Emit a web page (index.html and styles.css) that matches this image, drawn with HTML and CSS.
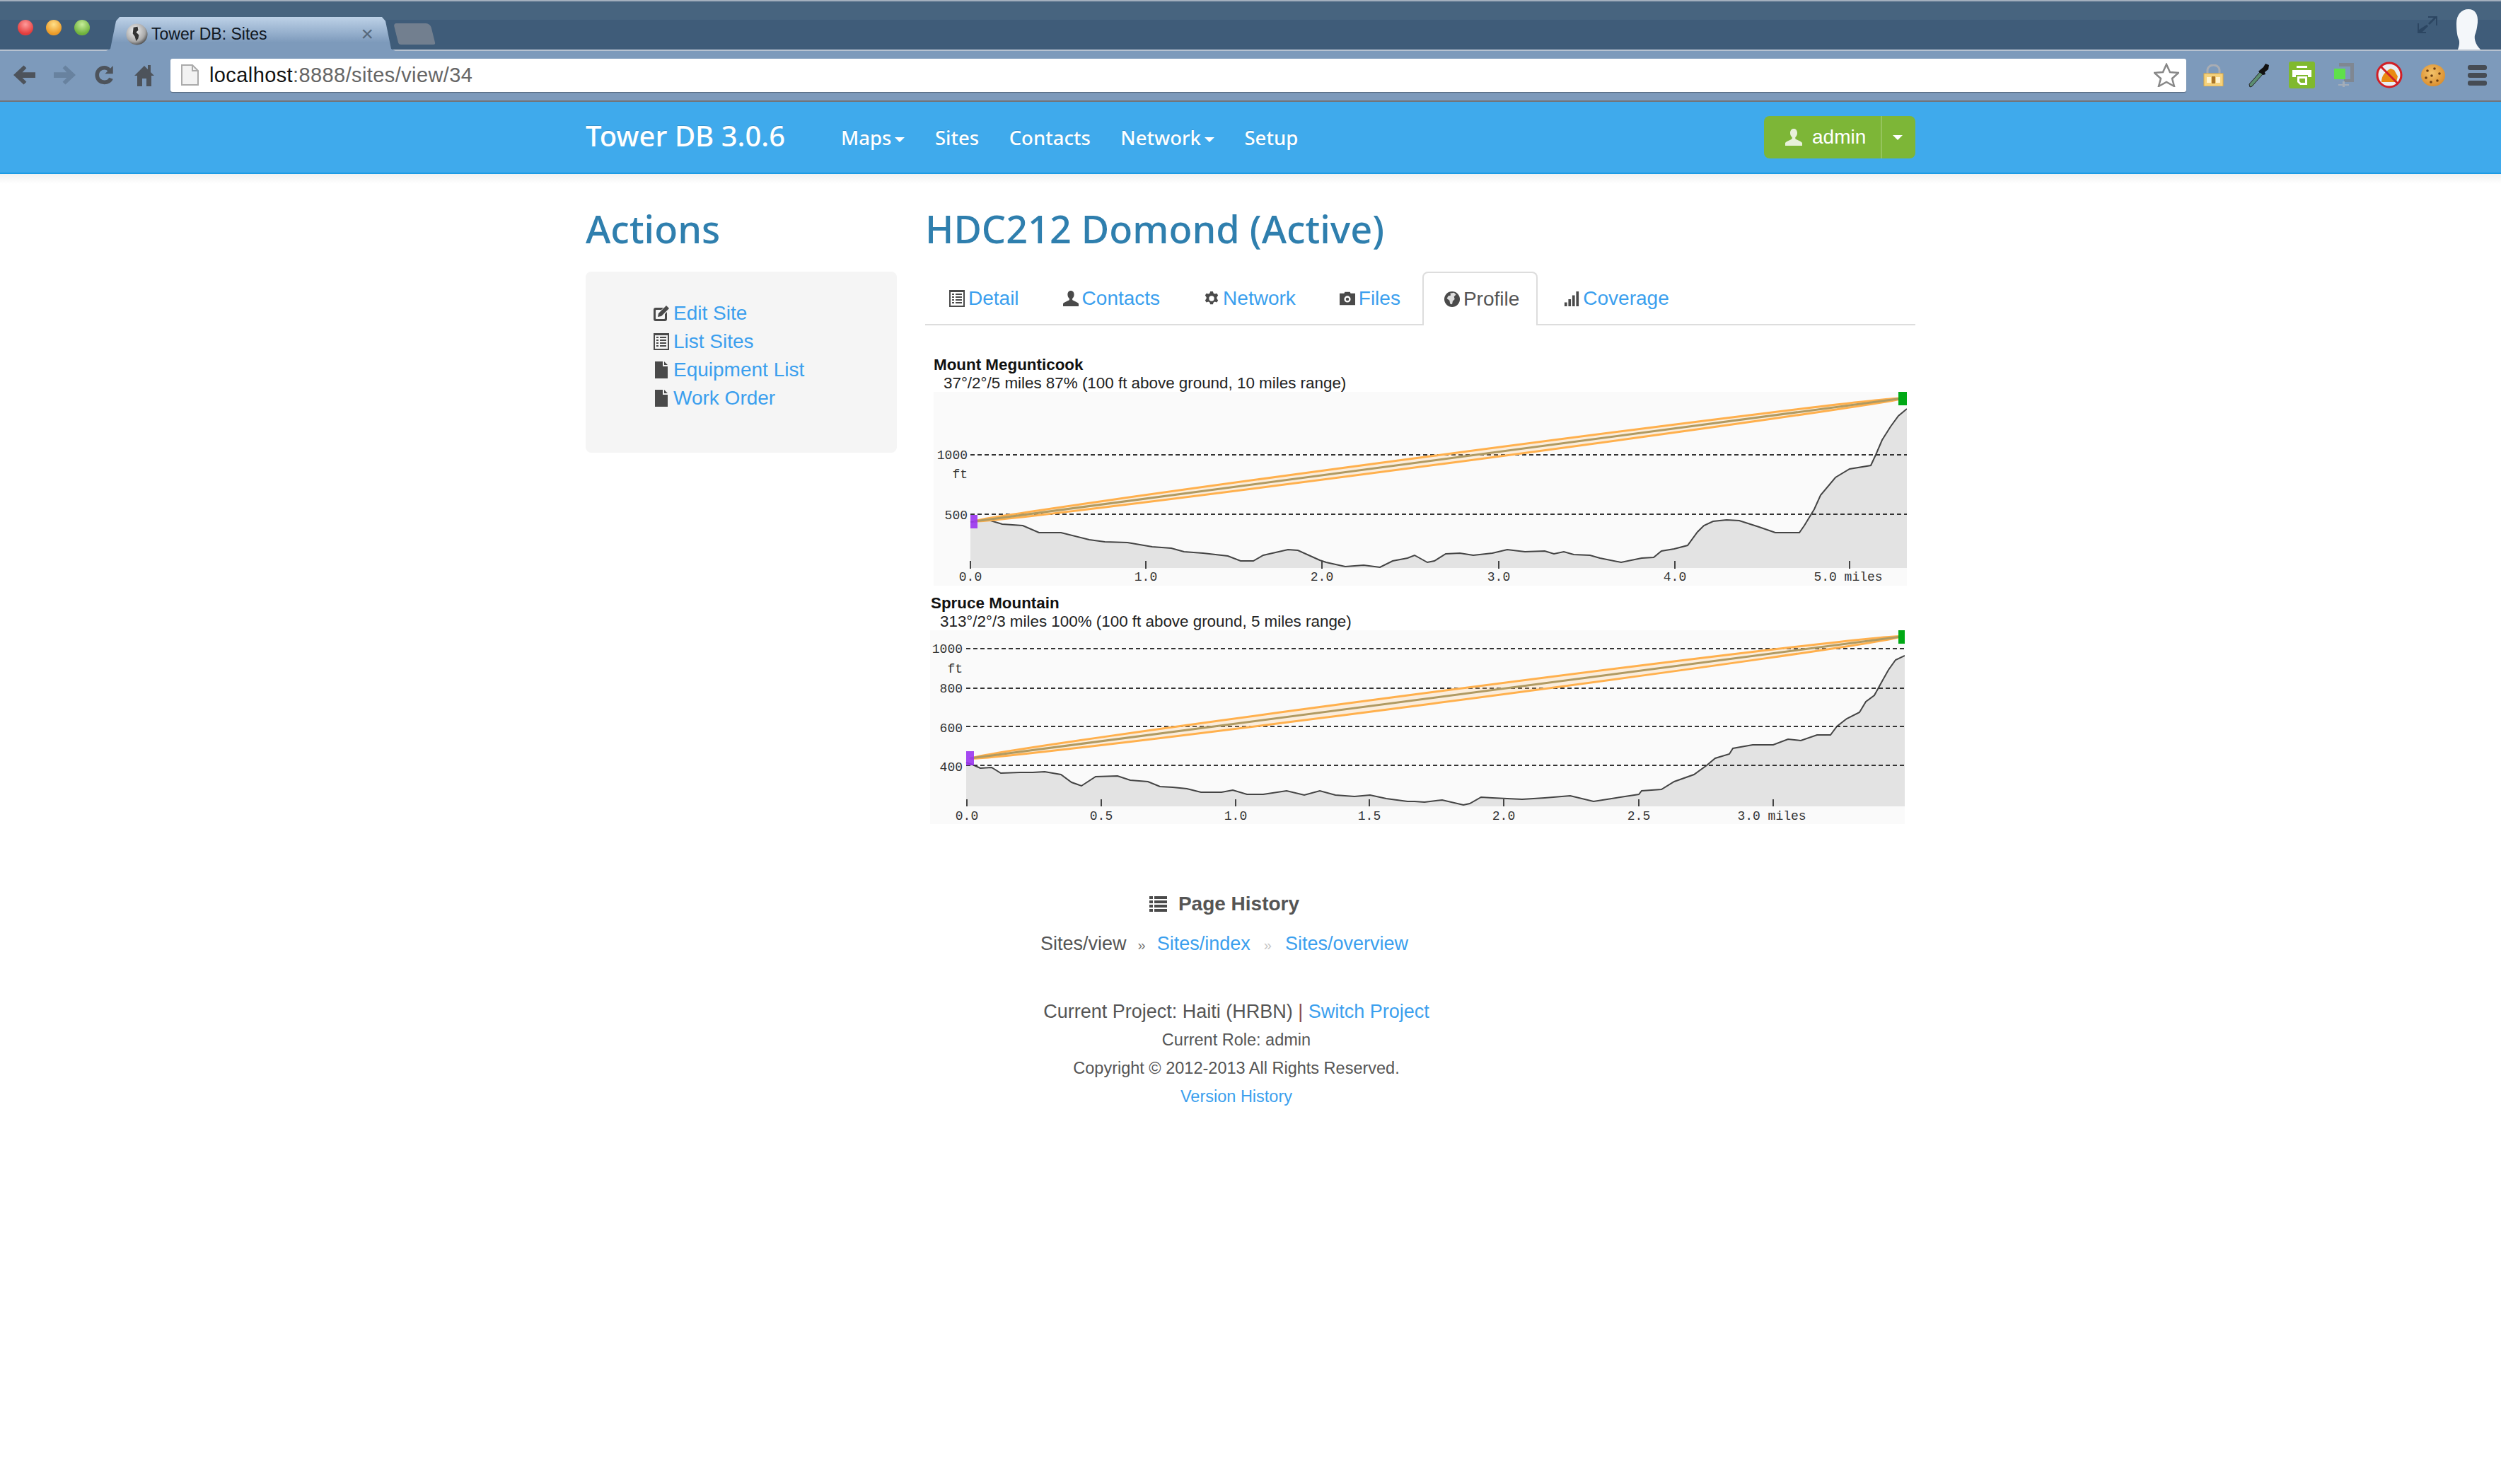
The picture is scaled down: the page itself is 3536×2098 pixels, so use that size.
FILE: index.html
```html
<!DOCTYPE html>
<html lang="en">
<head>
    <meta charset="UTF-8">
    <title>Tower DB: Sites</title>
    <link rel="stylesheet" href="styles.css">
</head>
<body>
    <svg class="defs" width="0" height="0">
        <symbol id="i-user" viewBox="0 0 24 24"><path d="M12 0c3.300 0 5 2.700 5 6 0 2.700-1.100 4.900-2.700 6v2c0 1.200 7.700 3.200 9.700 6v4H0v-4c2-2.800 9.700-4.800 9.700-6v-2C8.100 10.900 7 8.700 7 6c0-3.300 1.700-6 5-6z"/></symbol>
        <symbol id="i-listalt" viewBox="0 0 22 24"><path fill-rule="evenodd" d="M0 0h22v24H0zM2 3v19h18V3zM4 5h3v2H4zM9 5h9v2H9zM4 9h3v2H4zM9 9h9v2H9zM4 13h3v2H4zM9 13h9v2H9zM4 17h3v2H4zM9 17h9v2H9z"/></symbol>
        <symbol id="i-file" viewBox="0 0 18 24"><path d="M0 0h11v7h7v17H0zM13 0l5 5h-5z"/></symbol>
        <symbol id="i-edit" viewBox="0 0 24 24"><path d="M4 4h11l-3 3H5a1 1 0 0 0-1 1v11a1 1 0 0 0 1 1h11a1 1 0 0 0 1-1v-6l3-3v10a3 3 0 0 1-3 3H4a3 3 0 0 1-3-3V7a3 3 0 0 1 3-3zM19 1l4 4L12 16l-5 1 1-5z"/></symbol>
    </svg>

    <header class="chrome">
        <div class="tabstrip">
            <div class="lights">
                <span class="light light-red"></span>
                <span class="light light-amber"></span>
                <span class="light light-green"></span>
            </div>
            <div class="tab">
                <svg class="favicon" viewBox="0 0 32 32">
                    <defs><radialGradient id="globe" cx="40%" cy="35%" r="70%"><stop offset="0" stop-color="#f5f5f5"/><stop offset=".7" stop-color="#a9a9a9"/><stop offset="1" stop-color="#444"/></radialGradient></defs>
                    <circle cx="16" cy="16" r="15.500" fill="url(#globe)"/>
                    <path d="M11 6l6-1 1 5-3 3 4 4-1 5-3 4-2-7-3-4z" fill="#333"/>
                </svg>
                <span class="tab-title">Tower DB: Sites</span>
                <span class="tab-close">×</span>
            </div>
            <div class="newtab"></div>
            <svg class="expand" viewBox="0 0 28 30"><path d="M15 3h13v13h-2V6l-9 9-2-2 8-8h-8zM13 15l2 2-8 8h5v2H0v-4h0V13h2v9z" fill="#2c4662"/></svg>
            <svg class="avatar" viewBox="0 0 34 57"><path d="M17 0c9 0 14 7 13 19-1 8-2 13-4 18-1 5 1 13 8 20H2c2-5 3-11 1-15C1 38 0 30 0 20 0 8 7 0 17 0z" fill="#f4f7fa"/></svg>
        </div>
        <div class="toolbar">
            <svg class="tool" viewBox="0 0 32 30"><path d="M15 1l4 4-6 6h19v8H13l6 6-4 4L0 15z" fill="#4d535b"/></svg>
            <svg class="tool" viewBox="0 0 32 30"><path d="M17 1l-4 4 6 6H0v8h19l-6 6 4 4 15-14z" fill="#68829f"/></svg>
            <svg class="tool" viewBox="0 0 32 32"><path d="M15 2C7 2 1 8 1 16s6 14 14 14c6 0 11-3 13-8l-6-2c-1 3-4 4-7 4-4 0-8-3-8-8s4-8 8-8c2 0 4 1 5 2l-4 4h12V2l-4 4c-2-2-5-4-9-4z" fill="#4d535b"/></svg>
            <svg class="tool tool-home" viewBox="0 0 28 32"><path d="M14 3L0 17h4v15h7V21h6v11h7V17h4l-5-5V2h-4v6z" fill="#4d535b"/></svg>
            <div class="omnibox">
                <svg class="pageicon" viewBox="0 0 25 30"><path d="M1 1h15l8 8v20H1z" fill="#f2f2f2" stroke="#aaa" stroke-width="2"/><path d="M16 1v8h8" fill="none" stroke="#aaa" stroke-width="2"/></svg>
                <span class="url-host">localhost</span><span class="url-path">:8888/sites/view/34</span>
                <svg class="star" viewBox="0 0 36 34"><path d="M18 2l5 11 12 1-9 8 3 11-11-6-11 6 3-11-9-8 12-1z" fill="#fff" stroke="#888" stroke-width="2.500"/></svg>
            </div>
            <div class="extensions">
                <svg class="ext ext-lock" viewBox="0 0 29 31"><path d="M6 14V8a8.500 7 0 0 1 17 0v6" fill="none" stroke="#a9adb3" stroke-width="3"/><rect x="1" y="13" width="27" height="18" fill="#f5d27c" stroke="#e0a93e"/><path d="M5 18h6v8H5zM18 18h6v8h-6z" fill="#fff3cf"/><rect x="12" y="17" width="5" height="10" fill="#a9752a"/></svg>
                <svg class="ext ext-dropper" viewBox="0 0 30 35"><path d="M2 34l-1-4L16 13l4 3L5 33z" fill="#5d8f72" stroke="#222"/><path d="M15 11l6-5 3-5 5 2-1 6-5 4 1 3-3 1-7-5z" fill="#111"/></svg>
                <svg class="ext ext-print" viewBox="0 0 37 38"><rect width="37" height="38" rx="3" fill="#80b92e"/><path d="M11 6h15v3H11zM5 12h27v10h-5v-3H10v3H5z" fill="#fff"/><path d="M12 21h14v12H16l-4-4z" fill="#fff"/><path d="M15 24h8v6h-6l-2-2z" fill="#80b92e"/></svg>
                <svg class="ext ext-clamp" viewBox="0 0 30 37"><path d="M8 1h21v27H15v-4h9V6H8z" fill="#7f8792"/><rect x="1" y="9" width="16" height="15" fill="#5fe04a"/><path d="M13 27h3v8h-3zM7 31h15v2H7z" fill="#a4adb8"/></svg>
                <svg class="ext ext-block" viewBox="0 0 38 38"><circle cx="19" cy="19" r="17" fill="#e9eef3"/><path d="M8 29c0-9 5-15 13-19l5 2 5 9-2 8z" fill="#e98a10"/><circle cx="19" cy="19" r="17" fill="none" stroke="#d11f26" stroke-width="3"/><path d="M7 7l24 24" stroke="#d11f26" stroke-width="3"/></svg>
                <svg class="ext ext-cookie" viewBox="0 0 34 31"><defs><radialGradient id="cookie" cx="45%" cy="40%" r="65%"><stop offset="0" stop-color="#f3c26a"/><stop offset="1" stop-color="#d98b2a"/></radialGradient></defs><ellipse cx="17" cy="15.500" rx="17" ry="15.500" fill="url(#cookie)"/><g fill="#6b3d12"><circle cx="9" cy="9" r="1.800"/><circle cx="19" cy="6" r="1.800"/><circle cx="26" cy="13" r="1.800"/><circle cx="15" cy="16" r="1.800"/><circle cx="7" cy="19" r="1.800"/><circle cx="23" cy="23" r="1.800"/><circle cx="14" cy="25" r="1.800"/></g></svg>
                <div class="menu"><span></span><span></span><span></span></div>
            </div>
        </div>
    </header>

    <nav class="navbar">
        <div class="container navbar-inner">
            <a class="brand">Tower DB 3.0.6</a>
            <ul class="nav-links">
                <li>Maps<span class="caret"></span></li>
                <li>Sites</li>
                <li>Contacts</li>
                <li>Network<span class="caret"></span></li>
                <li>Setup</li>
            </ul>
            <div class="btn-group">
                <div class="btn-main">
                    <svg class="btn-icon"><use href="#i-user"/></svg>
                    <span>admin</span>
                </div>
                <div class="btn-caret"><span class="caret"></span></div>
            </div>
        </div>
    </nav>
    <div class="navbar-shadow"></div>

    <main class="container">
        <div class="columns">
            <aside class="sidebar">
                <h2 class="page-heading">Actions</h2>
                <ul class="actions">
                    <li><svg class="icon"><use href="#i-edit"/></svg><a>Edit Site</a></li>
                    <li><svg class="icon"><use href="#i-listalt"/></svg><a>List Sites</a></li>
                    <li><svg class="icon"><use href="#i-file"/></svg><a>Equipment List</a></li>
                    <li><svg class="icon"><use href="#i-file"/></svg><a>Work Order</a></li>
                </ul>
            </aside>
            <section class="content">
                <h2 class="page-heading">HDC212 Domond (Active)</h2>
                <ul class="tabs">
                    <li><svg class="icon"><use href="#i-listalt"/></svg><a>Detail</a></li>
                    <li><svg class="icon"><use href="#i-user"/></svg><a>Contacts</a></li>
                    <li>
                        <svg class="icon" viewBox="0 0 24 24"><path fill-rule="evenodd" d="M10 1h4l1 3 2 1 3-1 2 3-2 3v2l2 3-2 3-3-1-2 1-1 3h-4l-1-3-2-1-3 1-2-3 2-3v-2L2 7l2-3 3 1 2-1zM12 8a4 4 0 1 0 0 8 4 4 0 0 0 0-8z"/></svg>
                        <a>Network</a>
                    </li>
                    <li>
                        <svg class="icon" viewBox="0 0 24 24"><path fill-rule="evenodd" d="M7 4l1-2h8l1 2h7v18H0V4zM12 8a5 5 0 1 0 0 10 5 5 0 0 0 0-10zM12 10.500a2.500 2.500 0 1 1 0 5 2.500 2.500 0 0 1 0-5z"/></svg>
                        <a>Files</a>
                    </li>
                    <li class="active">
                        <svg class="icon" viewBox="0 0 24 24"><circle cx="12" cy="12" r="12"/><path d="M9 3l6-1 3 3-3 3 1 4-3 3-1 5-3-1-1-5-4-3 2-4 4-1z" fill="#ddd"/></svg>
                        <a>Profile</a>
                    </li>
                    <li>
                        <svg class="icon" viewBox="0 0 24 24"><path d="M1 18h4v6H1zM7 13h4v11H7zM13 7h4v17h-4zM19 1h4v23h-4z"/></svg>
                        <a>Coverage</a>
                    </li>
                </ul>

                <div class="profile profile-first">
                    <div class="profile-name">Mount Megunticook</div>
                    <div class="profile-info">37°/2°/5 miles 87% (100 ft above ground, 10 miles range)</div>
                    <svg class="chart" width="1376" height="274" viewBox="1320 554 1376 274">
                        <rect class="chart-bg" x="1320" y="554" width="1376" height="274"/>
                        <path class="ground" d="M1372 803V738L1382 737 1397 735 1417 741 1446 743 1469 753 1500 753 1540 763 1562 766 1594 767 1629 773 1656 775 1674 780 1701 782 1736 786 1754 793 1772 793 1786 785 1821 777 1835 778 1866 792 1875 795 1902 801 1928 799 1951 802 1969 793 1990 789 2000 785 2018 795 2028 793 2044 783 2064 782 2083 785 2110 782 2131 777 2156 780 2184 779 2197 783 2211 780 2225 784 2248 785 2262 789 2292 795 2321 789 2338 788 2349 779 2367 776 2386 771 2400 752 2409 743 2422 737 2441 735 2459 736 2487 745 2510 753 2544 753 2551 743 2565 720 2574 700 2595 675 2615 663 2645 658 2652 643 2661 622 2673 603 2684 588 2696 578V803z"/>
                        <polyline class="terrain" points="1372,738 1382,737 1397,735 1417,741 1446,743 1469,753 1500,753 1540,763 1562,766 1594,767 1629,773 1656,775 1674,780 1701,782 1736,786 1754,793 1772,793 1786,785 1821,777 1835,778 1866,792 1875,795 1902,801 1928,799 1951,802 1969,793 1990,789 2000,785 2018,795 2028,793 2044,783 2064,782 2083,785 2110,782 2131,777 2156,780 2184,779 2197,783 2211,780 2225,784 2248,785 2262,789 2292,795 2321,789 2338,788 2349,779 2367,776 2386,771 2400,752 2409,743 2422,737 2441,735 2459,736 2487,745 2510,753 2544,753 2551,743 2565,720 2574,700 2595,675 2615,663 2645,658 2652,643 2661,622 2673,603 2684,588 2696,578"/>
                        <line class="grid" x1="1372" y1="643" x2="2696" y2="643"/>
                        <line class="grid" x1="1372" y1="727" x2="2696" y2="727"/>
                        <path class="tick" d="M1372 793v11M1620 793v11M1869 793v11M2119 793v11M2368 793v11M2615 793v11"/>
                        <text class="label" x="1368" y="649" text-anchor="end">1000</text>
                        <text class="label" x="1368" y="676" text-anchor="end">ft</text>
                        <text class="label" x="1368" y="734" text-anchor="end">500</text>
                        <text class="label" x="1372" y="821" text-anchor="middle">0.0</text>
                        <text class="label" x="1620" y="821" text-anchor="middle">1.0</text>
                        <text class="label" x="1869" y="821" text-anchor="middle">2.0</text>
                        <text class="label" x="2119" y="821" text-anchor="middle">3.0</text>
                        <text class="label" x="2368" y="821" text-anchor="middle">4.0</text>
                        <text class="label" x="2613" y="821" text-anchor="middle">5.0 miles</text>
                        <path class="zone" d="M1378 737A661.600 6.500 -7.550 0 1 2690 563A661.600 6.500 -7.550 0 1 1378 737z"/>
                        <line class="beam" x1="1378" y1="737" x2="2690" y2="563"/>
                        <rect class="mark-from" x="1372" y="728" width="10" height="19"/>
                        <rect class="mark-to" x="2684" y="554" width="12" height="19"/>
                    </svg>
                </div>

                <div class="profile profile-second">
                    <div class="profile-name">Spruce Mountain</div>
                    <div class="profile-info">313°/2°/3 miles 100% (100 ft above ground, 5 miles range)</div>
                    <svg class="chart" width="1378" height="274" viewBox="1315 891 1378 274">
                        <rect class="chart-bg" x="1315" y="891" width="1378" height="274"/>
                        <path class="ground" d="M1366 1140V1078L1375 1081 1386 1086 1402 1085 1415 1093 1442 1092 1460 1092 1477 1091 1500 1095 1515 1106 1529 1111 1549 1098 1580 1097 1598 1103 1623 1105 1640 1112 1658 1113 1678 1115 1698 1120 1727 1120 1743 1117 1763 1123 1786 1123 1819 1118 1844 1124 1866 1118 1888 1124 1915 1126 1937 1124 1960 1129 1990 1133 2000 1133 2014 1134 2039 1131 2069 1138 2078 1136 2094 1127 2110 1128 2152 1130 2184 1128 2220 1125 2253 1133 2285 1128 2317 1123 2321 1118 2349 1116 2367 1105 2395 1095 2413 1082 2425 1072 2445 1066 2450 1058 2478 1053 2507 1053 2528 1045 2546 1047 2569 1039 2588 1039 2597 1027 2611 1016 2629 1007 2638 992 2650 983 2661 963 2670 947 2680 933 2693 927V1140z"/>
                        <polyline class="terrain" points="1366,1078 1375,1081 1386,1086 1402,1085 1415,1093 1442,1092 1460,1092 1477,1091 1500,1095 1515,1106 1529,1111 1549,1098 1580,1097 1598,1103 1623,1105 1640,1112 1658,1113 1678,1115 1698,1120 1727,1120 1743,1117 1763,1123 1786,1123 1819,1118 1844,1124 1866,1118 1888,1124 1915,1126 1937,1124 1960,1129 1990,1133 2000,1133 2014,1134 2039,1131 2069,1138 2078,1136 2094,1127 2110,1128 2152,1130 2184,1128 2220,1125 2253,1133 2285,1128 2317,1123 2321,1118 2349,1116 2367,1105 2395,1095 2413,1082 2425,1072 2445,1066 2450,1058 2478,1053 2507,1053 2528,1045 2546,1047 2569,1039 2588,1039 2597,1027 2611,1016 2629,1007 2638,992 2650,983 2661,963 2670,947 2680,933 2693,927"/>
                        <line class="grid" x1="1366" y1="917" x2="2693" y2="917"/>
                        <line class="grid" x1="1366" y1="973" x2="2693" y2="973"/>
                        <line class="grid" x1="1366" y1="1027" x2="2693" y2="1027"/>
                        <line class="grid" x1="1366" y1="1082" x2="2693" y2="1082"/>
                        <path class="tick" d="M1367 1130v10M1557 1130v10M1747 1130v10M1936 1130v10M2126 1130v10M2317 1130v10M2507 1130v10"/>
                        <text class="label" x="1361" y="923" text-anchor="end">1000</text>
                        <text class="label" x="1361" y="951" text-anchor="end">ft</text>
                        <text class="label" x="1361" y="979" text-anchor="end">800</text>
                        <text class="label" x="1361" y="1035" text-anchor="end">600</text>
                        <text class="label" x="1361" y="1090" text-anchor="end">400</text>
                        <text class="label" x="1367" y="1159" text-anchor="middle">0.0</text>
                        <text class="label" x="1557" y="1159" text-anchor="middle">0.5</text>
                        <text class="label" x="1747" y="1159" text-anchor="middle">1.0</text>
                        <text class="label" x="1936" y="1159" text-anchor="middle">1.5</text>
                        <text class="label" x="2126" y="1159" text-anchor="middle">2.0</text>
                        <text class="label" x="2317" y="1159" text-anchor="middle">2.5</text>
                        <text class="label" x="2505" y="1159" text-anchor="middle">3.0 miles</text>
                        <path class="zone" d="M1372 1072A663.600 8 -7.450 0 1 2688 900A663.600 8 -7.450 0 1 1372 1072z"/>
                        <line class="beam" x1="1372" y1="1072" x2="2688" y2="900"/>
                        <rect class="mark-from" x="1366" y="1062" width="11" height="20"/>
                        <rect class="mark-to" x="2684" y="891" width="9" height="19"/>
                    </svg>
                </div>
            </section>
        </div>

        <div class="history">
            <div class="history-title">
                <svg class="history-icon" viewBox="0 0 25 22"><path d="M0 0h5v4H0zM7 0h18v4H7zM0 6h5v4H0zM7 6h18v4H7zM0 12h5v4H0zM7 12h18v4H7zM0 18h5v4H0zM7 18h18v4H7z"/></svg>
                <span>Page History</span>
            </div>
            <div class="crumbs">
                <span>Sites/view</span><i class="sep">»</i><a>Sites/index</a><i class="sep sep-light">»</i><a>Sites/overview</a>
            </div>
        </div>

        <footer class="footer">
            <div class="footer-project">Current Project: Haiti (HRBN) <span class="pipe">|</span> <a>Switch Project</a></div>
            <div>Current Role: admin</div>
            <div>Copyright © 2012-2013 All Rights Reserved.</div>
            <div><a>Version History</a></div>
        </footer>
    </main>
</body>
</html>
```

FILE: styles.css
```css
* { box-sizing: border-box; }
body { margin: 0; background: #fff; color: #555; font-family: "Liberation Sans", Arial, sans-serif; font-size: 28px; }
ul { list-style: none; margin: 0; padding: 0; }
a { color: #3b9fee; }
.defs { position: absolute; }
.container { width: 1880px; margin: 0 auto; }

/* browser window */
.chrome { height: 144px; }
.tabstrip { height: 72px; display: flex; padding-left: 25px; border-top: 2px solid #a3afbd; border-bottom: 2px solid #b7c2d0; background: linear-gradient(#47647f 0, #47647f 26px, #3f5c79 26px); }
.lights { display: flex; gap: 18px; padding-top: 26px; }
.light { width: 22px; height: 22px; border-radius: 50%; }
.light-red { background: radial-gradient(circle at 50% 30%, #ff9b9b, #e33c3c 70%); }
.light-amber { background: radial-gradient(circle at 50% 30%, #ffe08a, #ec9a26 70%); }
.light-green { background: radial-gradient(circle at 50% 30%, #c6ec9a, #6fb23c 70%); }
.tab { width: 409px; height: 48px; margin: 22px 0 0 23px; padding-left: 28px; display: flex; align-items: center; flex: none; background: linear-gradient(#bdd1e7 0, #93adcb 50%, #7d9abb 75%); clip-path: polygon(0 100%, 6px 94%, 14px 12%, 19px 0, 390px 0, 395px 12%, 403px 94%, 100% 100%); }
.favicon { width: 31px; height: 31px; flex: none; }
.tab-title { margin-left: 5px; color: #10171f; font-size: 23px; }
.tab-close { margin-left: auto; margin-right: 31px; color: #55677b; font-size: 30px; }
.newtab { width: 52px; height: 30px; margin: 31px 0 0 1px; border-radius: 4px 6px 3px 3px; background: #727f8f; transform: skewX(14deg); }
.expand { width: 28px; height: 30px; margin: 18px 0 0 auto; }
.avatar { width: 34px; height: 57px; margin: 11px 29px 0 27px; }
.toolbar { height: 72px; display: flex; align-items: center; padding: 0 21px 2px 19px; background: #7d9abb; border-bottom: 2px solid #70757b; }
.tool { width: 31px; height: 30px; margin-right: 26px; flex: none; }
.tool-home { width: 28px; height: 32px; margin-right: 23px; }
.omnibox { width: 2850px; height: 47px; flex: none; display: flex; align-items: center; padding: 0 10px 0 15px; background: #fff; border-radius: 3px; box-shadow: 0 1px 1px rgba(0, 0, 0, .35); font-size: 29px; letter-spacing: .4px; }
.pageicon { width: 25px; height: 30px; margin-right: 15px; }
.url-host { color: #111; }
.url-path { color: #666; }
.star { width: 36px; height: 34px; margin-left: auto; }
.extensions { flex: 1; display: flex; align-items: center; padding-left: 24px; }
.ext { display: block; flex: none; }
.ext-lock { width: 29px; height: 31px; }
.ext-dropper { width: 30px; height: 35px; margin-left: 35px; }
.ext-print { width: 37px; height: 38px; margin-left: 27px; }
.ext-clamp { width: 30px; height: 37px; margin-left: 26px; }
.ext-block { width: 38px; height: 38px; margin-left: 30px; }
.ext-cookie { width: 34px; height: 31px; margin-left: 26px; }
.menu { width: 27px; margin-left: 32px; display: flex; flex-direction: column; gap: 4px; }
.menu span { height: 7px; border-radius: 3px; background: #464c54; }

/* navbar */
.navbar { height: 102px; background: #3faaec; border-bottom: 2px solid #1b9be5; color: #fff; }
.navbar-inner { height: 100px; display: flex; align-items: center; }
.navbar-shadow { height: 14px; margin-bottom: -14px; background: linear-gradient(#f1f1f1, #fff); }
.brand { width: 361px; padding-bottom: 6px; color: #fff; font-family: "Noto Sans", sans-serif; font-size: 40px; font-weight: 500; text-shadow: 0 -1px 0 rgba(0, 0, 0, .15); }
.nav-links { display: flex; gap: 42.500px; font-family: "Noto Sans", sans-serif; font-size: 27.500px; font-weight: 500; text-shadow: 0 -1px 0 rgba(0, 0, 0, .15); }
.caret { display: inline-block; margin-left: 5px; vertical-align: middle; border-top: 7px solid #fff; border-left: 7px solid transparent; border-right: 7px solid transparent; }
.btn-group { margin-left: auto; height: 60px; display: flex; background: #7db637; border-radius: 8px; font-size: 28px; }
.btn-main { width: 167px; display: flex; align-items: center; padding-left: 30px; border-right: 2px solid #95c45c; }
.btn-icon { width: 24px; height: 24px; margin-right: 14px; fill: #e8f1da; }
.btn-caret { width: 47px; display: flex; align-items: center; }
.btn-caret .caret { margin-left: 15px; }

/* main columns */
.columns { display: flex; gap: 40px; padding-top: 44px; }
.sidebar { width: 440px; flex: none; }
.content { width: 1400px; flex: none; }
.page-heading { height: 66px; margin: 0 0 28px; color: #2f7fae; font-family: "Noto Sans", sans-serif; font-size: 54px; font-weight: 500; line-height: 66px; }
.actions { height: 256px; padding: 39px 0 0 95px; background: #f5f5f5; border-radius: 8px; }
.actions li { height: 40px; display: flex; align-items: center; }
.icon { width: 24px; height: 24px; margin-right: 5px; flex: none; fill: #4a4a4a; }

/* tabs */
.tabs { height: 76px; padding-left: 3px; display: flex; border-bottom: 2px solid #ddd; }
.tabs .icon { width: 22px; }
.tabs li { height: 76px; padding: 0 31px 0 31px; display: flex; align-items: center; }
.tabs li.active { color: #555; background: #fff; border: 2px solid #ddd; border-bottom: 0; border-radius: 8px 8px 0 0; padding: 0 24px 0 29px; margin-right: 6px; }
.tabs .active a { color: #555; }

/* profile charts */
.profile { color: #222; font-size: 22.400px; }
.profile-first { padding: 43px 0 0 12px; }
.profile-second { padding: 12px 0 0 7px; }
.profile-name { height: 26px; padding-left: 1px; color: #111; font-weight: bold; line-height: 26px; }
.profile-first .profile-name { padding-left: 0; }
.profile-info { height: 25px; padding-left: 14px; line-height: 25px; }
.chart { display: block; }
.chart-bg { fill: #fafafa; }
.ground { fill: #e3e3e3; }
.terrain { fill: none; stroke: #444; stroke-width: 2; }
.grid { stroke: #333; stroke-width: 2; stroke-dasharray: 6 4; }
.tick { fill: none; stroke: #444; stroke-width: 2; }
.label { fill: #333; font-family: "Liberation Mono", monospace; font-size: 18px; }
.zone { fill: rgba(255, 200, 130, .25); stroke: #ffb04d; stroke-width: 3; }
.beam { stroke: #b09a62; stroke-width: 3; }
.mark-from { fill: #9a34f0; fill-opacity: .9; }
.mark-to { fill: #00a915; }

/* page history and footer */
.history { width: 1840px; margin-right: 40px; padding-top: 93px; padding-right: 34px; text-align: center; }
.history-title { height: 40px; display: flex; align-items: center; justify-content: center; gap: 16px; color: #555; font-weight: bold; }
.history-icon { width: 25px; height: 22px; fill: #4a4a4a; }
.crumbs { height: 40px; margin-top: 16px; font-size: 27px; line-height: 40px; }
.sep { margin: 0 16px; color: #777; font-size: 20px; font-style: normal; }
.sep-light { margin: 0 19px; color: #c6c6c6; }
.footer { width: 1840px; padding-top: 56px; padding-bottom: 40px; font-size: 23.500px; line-height: 40px; text-align: center; }
.footer-project { font-size: 27px; }
.pipe { color: #8a4b4b; }
```
